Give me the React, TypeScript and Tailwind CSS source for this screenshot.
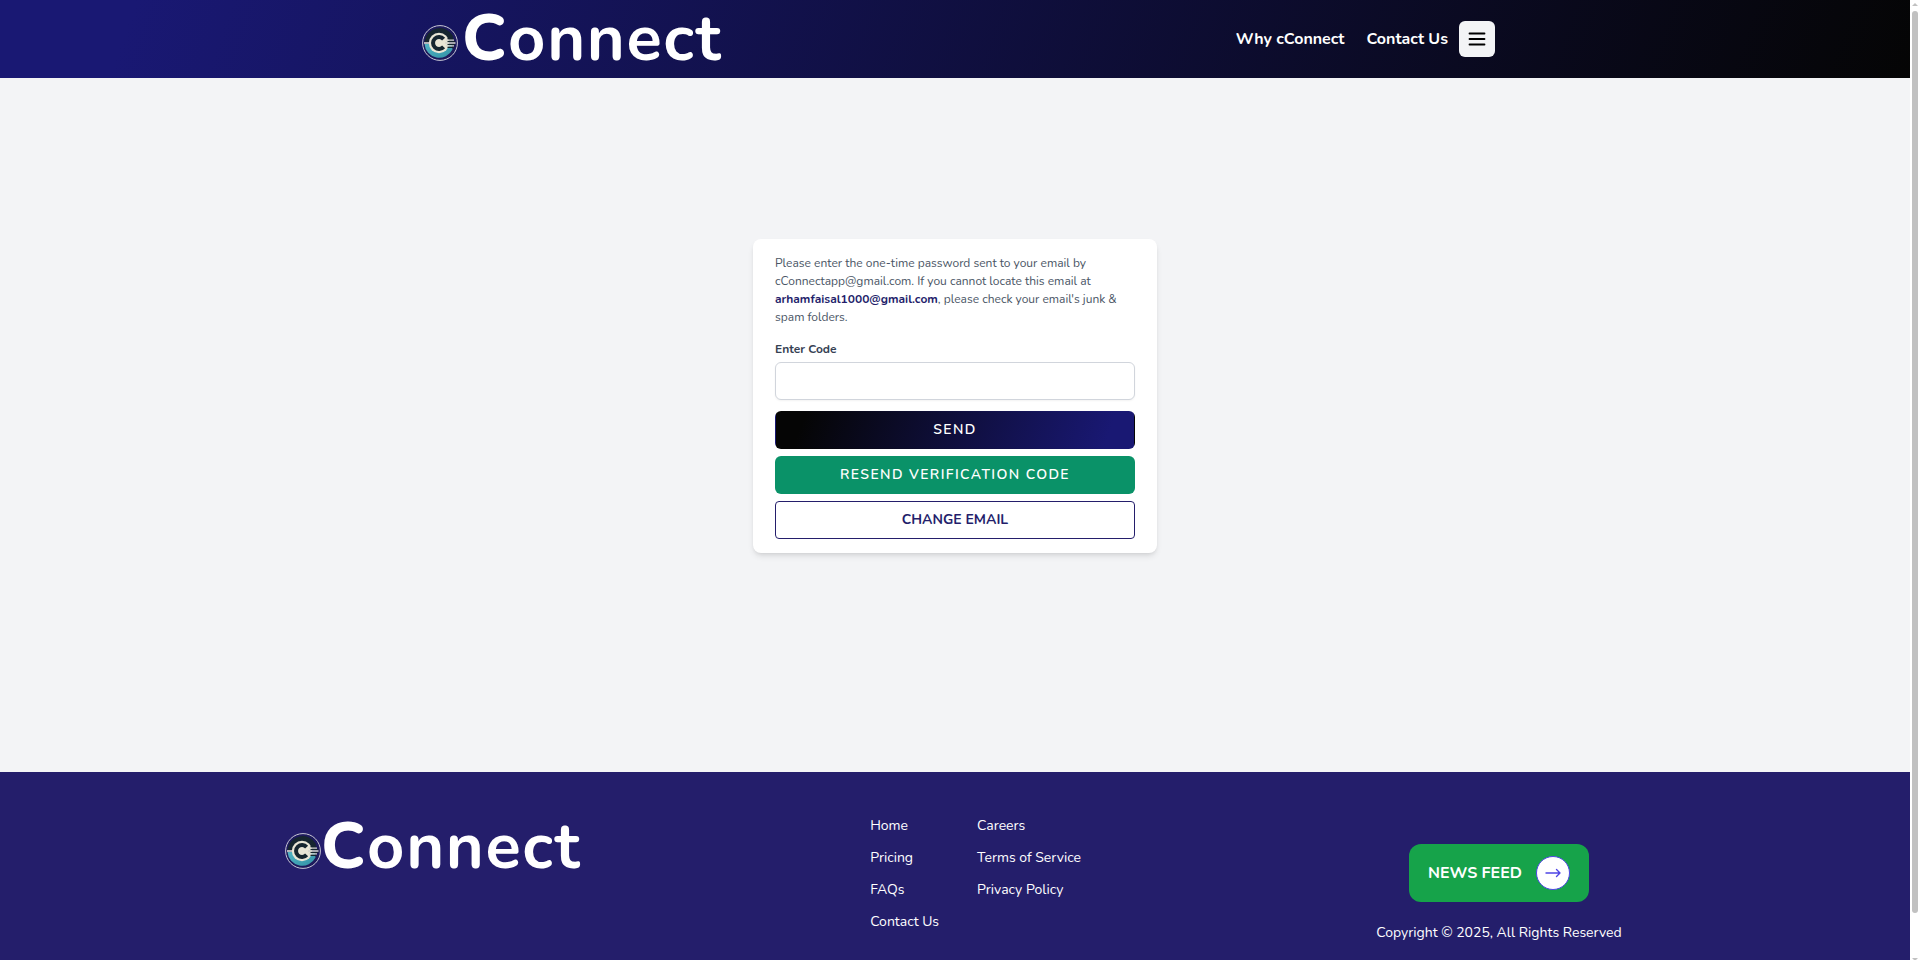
import { useId } from 'react'

function Emblem() {
  const id = useId()
  return (
    <svg viewBox="0 0 36 36" className="size-9 shrink-0" aria-hidden="true">
      <defs>
        <linearGradient id={id} x1="0" y1="0" x2="1" y2="1">
          <stop offset="0" stopColor="#52b4c4" />
          <stop offset="1" stopColor="#3292a6" />
        </linearGradient>
      </defs>
      <circle cx="18" cy="18" r="17.4" fill="#1d1a5c" stroke="#c9c8d6" strokeWidth="1" />
      <path d="M2.500 17a15.200 15.200 0 0 1 28.500-6l-1.500 6z" fill="#16262f" />
      <path d="M2.500 19h27l1 5.500a14.800 14.800 0 0 1-28-5.500z" fill={`url(#${id})`} />
      <path d="M2 18h8" stroke="#e9e9db" strokeWidth="1.500" />
      <circle cx="17" cy="18" r="10.200" fill="#e9e6d6" />
      <path d="M21.600 14.100a6 6 0 1 0 0 7.800" fill="none" stroke="#16262f" strokeWidth="4" />
      <path d="M25.500 16.600h7.500M25.500 19.400h7.500M25.500 13.800h6M25.500 22.200h6" stroke="#16262f" strokeWidth="1.400" />
      <path d="M24 15.200h8M23 18h10.500M24 20.800h8" stroke="#d5d6cf" strokeWidth="1.300" />
    </svg>
  )
}

function Logo({ className }: { className: string }) {
  return (
    <a href="#home" className={`flex items-center text-[65px] leading-[72px] font-bold tracking-wide text-white ${className}`}>
      <span className="mt-2">
        <Emblem />
      </span>
      <span>
        <span className="font-extrabold">C</span>onnect
      </span>
    </a>
  )
}

const linkColumns = [
  ['Home', 'Pricing', 'FAQs', 'Contact Us'],
  ['Careers', 'Terms of Service', 'Privacy Policy'],
]

export default function App() {
  return (
    <div className="flex min-h-screen bg-white font-['Nunito','Lato',sans-serif]">
      <div className="flex min-w-0 flex-1 flex-col bg-gray-100">
        <header className="h-[78px] bg-[linear-gradient(109.6deg,#191873_7%,#050505_100%)]">
          <div className="mx-auto flex h-[77px] max-w-[1080px] items-center justify-between">
            <Logo className="gap-1 pl-[7px]" />
            <nav className="flex items-center text-base font-bold text-white">
              <a href="#why" className="mr-[22px]">Why cConnect</a>
              <a href="#contact" className="mr-[11px]">Contact Us</a>
              <button
                type="button"
                aria-label="Open menu"
                className="flex size-9 items-center justify-center rounded-md bg-gray-100 text-black"
              >
                <svg viewBox="0 0 20 20" className="size-5" fill="none" stroke="currentColor" strokeWidth="1.800" strokeLinecap="round" aria-hidden="true">
                  <path d="M2.500 4.500h15M2.500 10h15M2.500 15.500h15" />
                </svg>
              </button>
            </nav>
          </div>
        </header>

        <main className="flex flex-1 items-center justify-center pb-[58px]">
          <form className="w-[404px] rounded-lg bg-white px-[22px] pt-[15px] pb-3.5 shadow-md" onSubmit={(e) => e.preventDefault()}>
            <p className="text-xs leading-[18px] text-gray-600">
              Please enter the one-time password sent to your email by cConnectapp@gmail.com. If you cannot locate this
              email at <span className="font-bold text-[#241e6b]">arhamfaisal1000@gmail.com</span>, please check your
              email&apos;s junk &amp; spam folders.
            </p>
            <label htmlFor="code" className="mt-3.5 block text-xs leading-[18px] font-bold text-gray-700">
              Enter Code
            </label>
            <input
              id="code"
              type="text"
              className="mt-1 block h-[38px] w-full rounded-md border border-gray-300 bg-white px-3 text-sm shadow-xs"
            />
            <div className="mt-[11px] flex flex-col gap-[7px] text-sm">
              <button
                type="submit"
                className="h-[38px] rounded-md border border-transparent bg-[linear-gradient(109.6deg,#050505_8%,#191873_92%)] font-semibold tracking-widest text-white"
              >
                SEND
              </button>
              <button type="button" className="h-[38px] rounded-md bg-[#0a9268] font-semibold tracking-widest text-white">
                RESEND VERIFICATION CODE
              </button>
              <button type="button" className="h-[38px] rounded-sm border border-[#241e6b] bg-white font-bold text-[#241e6b]">
                CHANGE EMAIL
              </button>
            </div>
          </form>
        </main>

        <footer className="h-[188px] bg-[#241e6b] text-white">
          <div className="mx-auto flex max-w-[1340px] items-start justify-between">
            <Logo className="mt-[39px]" />
            <div className="mt-[43px] flex w-[214px] gap-[38px] text-sm leading-[22px]">
              {linkColumns.map((links) => (
                <ul key={links[0]} className="flex shrink-0 flex-col gap-2.5">
                  {links.map((label) => (
                    <li key={label}>
                      <a href="#footer">{label}</a>
                    </li>
                  ))}
                </ul>
              ))}
            </div>
            <div className="mt-[72px] flex w-[252px] flex-col items-center">
              <a href="#news" className="flex h-[58px] items-center gap-3.5 rounded-xl bg-[#16a34a] px-[19px] text-base font-bold">
                NEWS FEED
                <span className="flex size-[34px] items-center justify-center rounded-full border border-[#4f46e5] bg-white text-[#4f46e5]">
                  <svg viewBox="0 0 20 20" className="size-5" fill="none" stroke="currentColor" strokeWidth="1.400" strokeLinecap="round" strokeLinejoin="round" aria-hidden="true">
                    <path d="M3 10h14M13.500 6.500L17 10l-3.500 3.500" />
                  </svg>
                </span>
              </a>
              <p className="mt-5 text-sm leading-[22px]">Copyright © 2025, All Rights Reserved</p>
            </div>
          </div>
        </footer>
      </div>

      <div className="sticky top-0 flex h-screen w-2 shrink-0 flex-col items-end justify-between" aria-hidden="true">
        <svg viewBox="0 0 6 11" className="h-[11px] w-1.5 fill-[#c1c1c1]">
          <path d="M3 3l3 3H0z" />
        </svg>
        <div className="mb-auto h-[94%] w-1.5 rounded-full bg-[#c1c1c1]" />
        <svg viewBox="0 0 6 3" className="h-[3px] w-1.5 fill-[#c1c1c1]">
          <path d="M0 1h6L3 4z" />
        </svg>
      </div>
    </div>
  )
}
